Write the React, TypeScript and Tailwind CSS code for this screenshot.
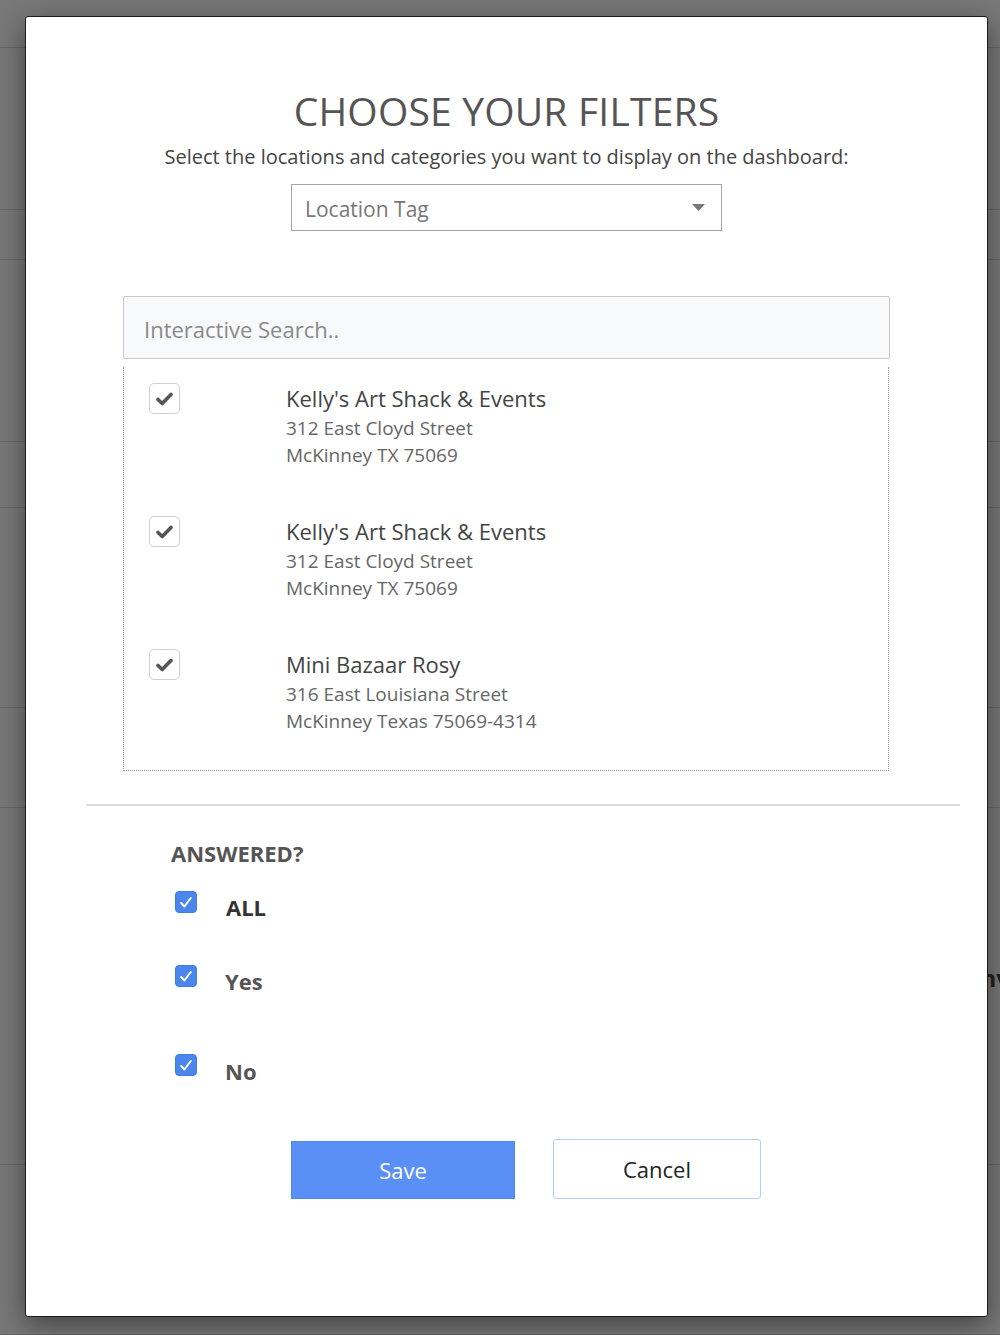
import React from "react";

const font = { fontFamily: '"Open Sans", "Noto Sans", sans-serif' };

function GrayCheck() {
  return (
    <div className="w-[31px] h-[31px] shrink-0 rounded-[5px] border border-[#cfcfcf] bg-white flex items-center justify-center">
      <svg width="17" height="14" viewBox="0 0 17 14">
        <path d="M2 7.5 L6.2 11.5 L15 2.5" fill="none" stroke="#555" strokeWidth="3.6" strokeLinecap="round" strokeLinejoin="round" />
      </svg>
    </div>
  );
}

function BlueCheck() {
  return (
    <div className="w-[22px] h-[22px] shrink-0 rounded-[4px] bg-[#4a86ec] border border-[#3f7be0] flex items-center justify-center">
      <svg width="14" height="13" viewBox="0 0 14 13">
        <path d="M2.2 7 L5.4 10.5 L11.8 2" fill="none" stroke="#fff" strokeWidth="2" strokeLinecap="round" strokeLinejoin="round" />
      </svg>
    </div>
  );
}

const locations = [
  { name: "Kelly's Art Shack & Events", l1: "312 East Cloyd Street", l2: "McKinney TX 75069" },
  { name: "Kelly's Art Shack & Events", l1: "312 East Cloyd Street", l2: "McKinney TX 75069" },
  { name: "Mini Bazaar Rosy", l1: "316 East Louisiana Street", l2: "McKinney Texas 75069-4314" },
];

const bgRows = [48, 162, 50, 182, 66, 200, 100, 357, 170];

export default function App() {
  return (
    <div className="relative w-full h-[1335px] overflow-hidden bg-[#787878]" style={font}>
      {/* underlying page */}
      <div className="flex flex-col">
        {bgRows.map((h, i) => (
          <div key={i} className="border-b border-[#676767] relative" style={{ height: h }}>
            {i === 7 && (
              <span className="absolute right-[-10px] top-[154px] text-[24px] leading-[32px] font-bold text-[#222]">nv</span>
            )}
          </div>
        ))}
      </div>

      {/* modal */}
      <div className="absolute left-[25px] top-[16px] w-[963px] h-[1301px] bg-white border border-[#1c1c1c] rounded-[3px] shadow-[0_8px_28px_rgba(0,0,0,0.45)] flex flex-col">
        <h1 className="pt-[68px] text-center text-[39px] leading-[52px] text-[#555] tracking-[0.2px]">CHOOSE YOUR FILTERS</h1>
        <p className="mt-[7px] text-center text-[20px] leading-[26px] font-medium text-[#444]">
          Select the locations and categories you want to display on the dashboard:
        </p>
        <div className="mt-[14px] self-center w-[431px] h-[47px] border border-[#a6a6a6] flex items-center justify-between pl-[13px] pr-[16px]">
          <span className="text-[21px] leading-[28px] mt-[2px] text-[#777]">Location Tag</span>
          <svg width="13" height="7" viewBox="0 0 13 7">
            <path d="M0 0 L13 0 L6.5 7 Z" fill="#777" />
          </svg>
        </div>

        <div className="mt-[65px] self-center w-[767px] flex flex-col">
          <div className="h-[63px] bg-[#f8f9fa] border border-[#c8c8c8] rounded-[2px] flex items-center pl-[20px]">
            <span className="text-[22px] leading-[30px] mt-[3px] text-[#8a8a8a]">Interactive Search..</span>
          </div>
          <div className="mt-[8px] w-[766px] border border-dotted border-t-0 border-[#9a9a9a] pt-[16px] pb-[35px] flex flex-col gap-[47px]">
            {locations.map((loc, i) => (
              <div key={i} className="flex items-start pl-[25px]">
                <GrayCheck />
                <div className="ml-[106px] flex flex-col">
                  <span className="text-[22px] leading-[31px] text-[#444]">{loc.name}</span>
                  <span className="text-[19px] leading-[27px] mt-[1px] text-[#666]">{loc.l1}</span>
                  <span className="text-[19px] leading-[27px] text-[#666]">{loc.l2}</span>
                </div>
              </div>
            ))}
          </div>
        </div>

        <div className="mt-[33px] ml-[60px] w-[874px] h-[2px] bg-[#dedede]" />

        <div className="pl-[145px] flex flex-col">
          <span className="mt-[32px] text-[22px] leading-[30px] font-bold text-[#555]">ANSWERED?</span>
          <div className="mt-[23px] flex items-start pl-[4px]">
            <BlueCheck />
            <span className="ml-[29px] mt-[1px] text-[22px] leading-[30px] font-bold text-[#333]">ALL</span>
          </div>
          <div className="mt-[43px] flex items-start pl-[4px]">
            <BlueCheck />
            <span className="ml-[28px] mt-[1px] text-[22px] leading-[30px] font-bold text-[#555]">Yes</span>
          </div>
          <div className="mt-[58px] flex items-start pl-[4px]">
            <BlueCheck />
            <span className="ml-[28px] mt-[2px] text-[22px] leading-[30px] font-bold text-[#555]">No</span>
          </div>
        </div>

        <div className="mt-[53px] pl-[265px] flex items-end gap-[38px]">
          <button className="w-[224px] h-[58px] bg-[#5a8ff5] border border-[#4f86f0] text-white text-[22px]">Save</button>
          <button className="w-[208px] h-[60px] bg-white border border-[#b5cdf7] rounded-[3px] text-[#222] text-[22px]">Cancel</button>
        </div>
      </div>
    </div>
  );
}
